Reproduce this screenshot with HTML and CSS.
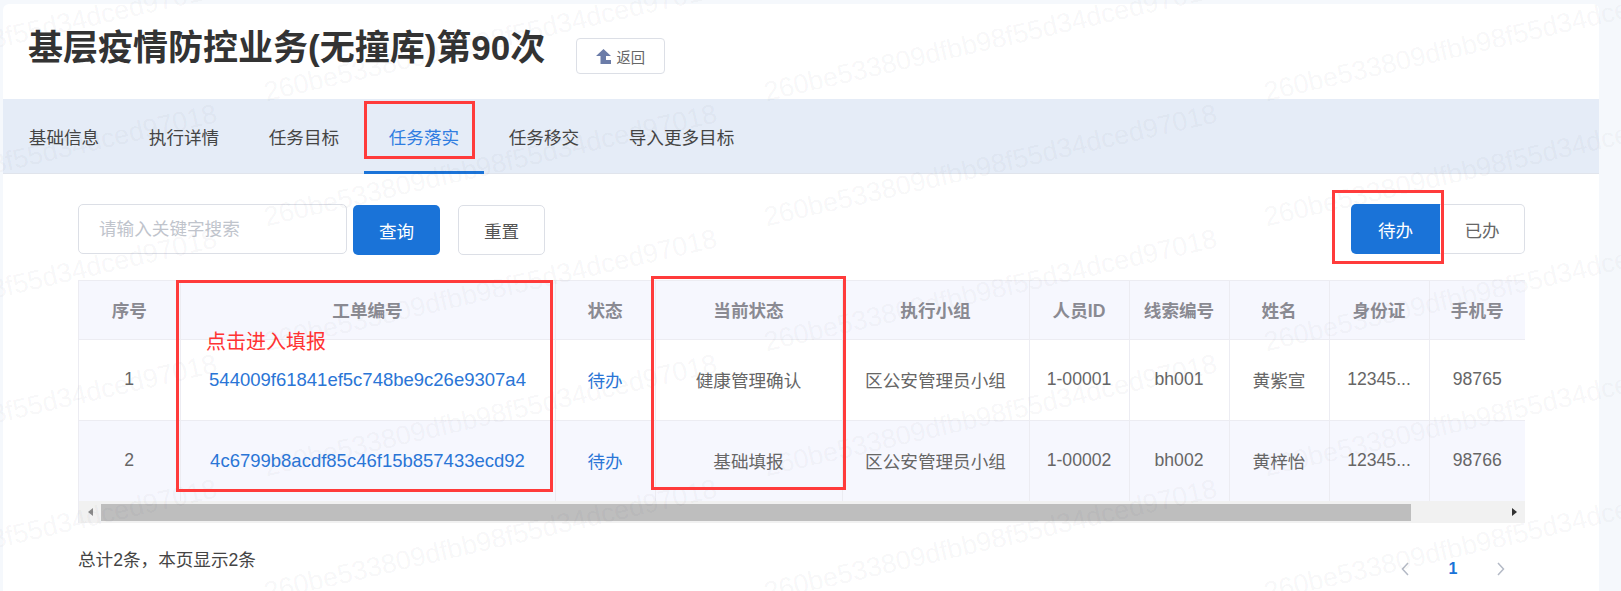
FILE: index.html
```html
<!DOCTYPE html>
<html lang="zh-CN">
<head>
<meta charset="utf-8">
<title>基层疫情防控业务(无撞库)第90次</title>
<link rel="stylesheet" href="styles.css">
</head>
<body>
<div class="page">
  <main class="card">
    <header class="head">
      <h1 class="title">基层疫情防控业务(无撞库)第90次</h1>
      <button class="back"><svg class="back-icon" viewBox="0 0 15 15"><path d="M7.5 0 15 7H10V11H15V15H4.5V7H0Z"/></svg>返回</button>
    </header>
    <nav class="tabs">
      <a class="tab">基础信息</a>
      <a class="tab">执行详情</a>
      <a class="tab">任务目标</a>
      <a class="tab active">任务落实</a>
      <a class="tab">任务移交</a>
      <a class="tab">导入更多目标</a>
    </nav>
    <section class="content">
      <div class="toolbar">
        <div class="search">
          <div class="input">请输入关键字搜索</div>
          <button class="btn primary">查询</button>
          <button class="btn reset">重置</button>
        </div>
        <div class="toggle">
          <button class="seg on">待办</button>
          <button class="seg off">已办</button>
        </div>
      </div>
      <div class="table-wrap">
        <table class="grid">
          <colgroup>
            <col class="c1"><col class="c2"><col class="c3"><col class="c4"><col class="c5">
            <col class="c6"><col class="c6"><col class="c6"><col class="c6"><col class="c7">
          </colgroup>
          <thead>
            <tr><th>序号</th><th>工单编号</th><th>状态</th><th>当前状态</th><th>执行小组</th><th>人员ID</th><th>线索编号</th><th>姓名</th><th>身份证</th><th>手机号</th></tr>
          </thead>
          <tbody>
            <tr><td>1</td><td><a class="link id">544009f61841ef5c748be9c26e9307a4</a></td><td><a class="link">待办</a></td><td>健康管理确认</td><td>区公安管理员小组</td><td>1-00001</td><td>bh001</td><td>黄紫宣</td><td>12345...</td><td>98765</td></tr>
            <tr class="alt"><td>2</td><td><a class="link id">4c6799b8acdf85c46f15b857433ecd92</a></td><td><a class="link">待办</a></td><td>基础填报</td><td>区公安管理员小组</td><td>1-00002</td><td>bh002</td><td>黄梓怡</td><td>12345...</td><td>98766</td></tr>
          </tbody>
        </table>
        <div class="scrollbar">
          <span class="arrow left"></span>
          <span class="thumb"></span>
          <span class="arrow right"></span>
        </div>
      </div>
      <div class="foot">
        <div class="total">总计2条，本页显示2条</div>
        <div class="pager">
          <span class="pg"><svg class="chev" viewBox="0 0 8 14"><path d="M7 1 1.5 7 7 13"/></svg></span>
          <span class="pg cur">1</span>
          <span class="pg"><svg class="chev" viewBox="0 0 8 14"><path d="M1 1 6.5 7 1 13"/></svg></span>
        </div>
      </div>
    </section>
  </main>

  <div class="watermarks" aria-hidden="true">
    <span>260be533809dfbb98f55d34dced97018</span><span>260be533809dfbb98f55d34dced97018</span><span>260be533809dfbb98f55d34dced97018</span><span>260be533809dfbb98f55d34dced97018</span>
    <span>260be533809dfbb98f55d34dced97018</span><span>260be533809dfbb98f55d34dced97018</span><span>260be533809dfbb98f55d34dced97018</span><span>260be533809dfbb98f55d34dced97018</span>
    <span>260be533809dfbb98f55d34dced97018</span><span>260be533809dfbb98f55d34dced97018</span><span>260be533809dfbb98f55d34dced97018</span><span>260be533809dfbb98f55d34dced97018</span>
    <span>260be533809dfbb98f55d34dced97018</span><span>260be533809dfbb98f55d34dced97018</span><span>260be533809dfbb98f55d34dced97018</span><span>260be533809dfbb98f55d34dced97018</span>
    <span>260be533809dfbb98f55d34dced97018</span><span>260be533809dfbb98f55d34dced97018</span><span>260be533809dfbb98f55d34dced97018</span><span>260be533809dfbb98f55d34dced97018</span>
    <span>260be533809dfbb98f55d34dced97018</span><span>260be533809dfbb98f55d34dced97018</span><span>260be533809dfbb98f55d34dced97018</span><span>260be533809dfbb98f55d34dced97018</span>
  </div>

  <div class="mark mark-tab"></div>
  <div class="mark mark-toggle"></div>
  <div class="mark mark-id"></div>
  <div class="mark mark-state"></div>
  <div class="note">点击进入填报</div>
</div>
</body>
</html>
```

FILE: styles.css
```css
* { box-sizing: border-box; }
html, body { margin: 0; padding: 0; }
body {
  font-family: "Liberation Sans", "Noto Sans CJK SC", sans-serif;
  font-size: 17.6px;
  color: #555;
}
.page {
  position: relative;
  width: 1621px;
  height: 591px;
  overflow: hidden;
  background: #f5f8fc;
  padding: 4px 22px 0 3px;
}
.card {
  background: #fff;
  height: 587px;
  border-radius: 6px 6px 0 0;
  display: flex;
  flex-direction: column;
}
.head {
  height: 95px;
  flex: none;
  display: flex;
  align-items: flex-start;
  padding-left: 25px;
}
.title {
  margin: 19px 0 0;
  font-size: 35px;
  line-height: 50px;
  font-weight: 700;
  color: #333;
  white-space: nowrap;
}
.back {
  margin: 34px 0 0 31px;
  width: 89px;
  height: 36px;
  background: #fff;
  border: 1px solid #dcdfe6;
  border-radius: 4px;
  font: inherit;
  font-size: 14.3px;
  color: #666;
  display: flex;
  align-items: center;
  justify-content: center;
  gap: 5px;
  padding: 0;
}
.back-icon { width: 15px; height: 15px; fill: #6b7ca8; }
.tabs {
  height: 75px;
  flex: none;
  background: #e5ecf7;
  border-bottom: 1px solid #e0e4ec;
  display: flex;
  padding-left: 1px;
}
.tab {
  padding: 0 24.8px;
  height: 75px;
  display: flex;
  align-items: center;
  justify-content: center;
  white-space: nowrap;
  color: #444;
}
.tab.active {
  color: #2f7de1;
  box-shadow: inset 0 -3px 0 #1a73d8;
}
.content { padding: 30px 74px 0 75px; flex: 1; }
.toolbar {
  display: flex;
  justify-content: space-between;
  height: 50px;
}
.search { display: flex; align-items: flex-start; }
.input {
  width: 269px;
  height: 50px;
  border: 1px solid #dcdfe6;
  border-radius: 5px;
  color: #c0c4cc;
  padding-left: 20px;
  line-height: 48px;
}
.btn {
  font: inherit;
  height: 50px;
  width: 87px;
  margin-top: 1px;
  border-radius: 5px;
  padding: 0;
}
.primary {
  position: relative;
  z-index: 2;
  margin-left: 6px;
  background: #1a73d8;
  border: 0;
  color: #fff;
}
.reset {
  margin-left: 18px;
  background: #fff;
  border: 1px solid #dcdfe6;
  color: #555;
}
.toggle { display: flex; }
.seg { font: inherit; height: 50px; padding: 0; }
.seg.on {
  position: relative;
  z-index: 2;
  width: 89px;
  background: #1a73d8;
  color: #fff;
  border: 0;
  border-radius: 5px 0 0 5px;
}
.seg.off {
  width: 85px;
  background: #fff;
  color: #666;
  border: 1px solid #dcdfe6;
  border-left: 0;
  border-radius: 0 5px 5px 0;
}
.table-wrap {
  position: relative;
  margin-top: 26px;
  width: 1447px;
  border-left: 1px solid #ececf2;
  border-top: 1px solid #ececf2;
}
.grid {
  width: 1446px;
  border-collapse: collapse;
  table-layout: fixed;
}
.c1 { width: 101px; }
.c2 { width: 375px; }
.c3 { width: 100px; }
.c4 { width: 187px; }
.c5 { width: 187px; }
.c6 { width: 100px; }
.c7 { width: 96px; }
th, td {
  padding: 0;
  text-align: center;
  border-right: 1px solid #ececf2;
  border-bottom: 1px solid #ececf2;
  white-space: nowrap;
  overflow: hidden;
}
th:last-child, td:last-child { border-right: 0; }
th {
  height: 58px;
  background: #f6f7fe;
  color: #8a8a92;
  font-weight: 700;
}
td { height: 81px; background: #fff; color: #666; }
.alt td { background: #f6f7fe; border-bottom: 0; }
.link { color: #2a75d6; }
.id { font-size: 18.5px; }
.scrollbar {
  position: relative;
  height: 22px;
  background: #f1f1f1;
  display: flex;
  align-items: center;
}
.thumb {
  position: absolute;
  left: 22px;
  width: 1310px;
  height: 17px;
  background: #bebebe;
}
.arrow { width: 0; height: 0; border-style: solid; border-color: transparent; }
.arrow.left {
  margin-left: 9px;
  border-width: 4px 5px 4px 0;
  border-right-color: #8a8a8a;
}
.arrow.right {
  margin-left: auto;
  margin-right: 8px;
  border-width: 4px 0 4px 5px;
  border-left-color: #333;
}
.foot {
  display: flex;
  justify-content: space-between;
  align-items: flex-start;
  padding-top: 25px;
}
.total { line-height: 24px; color: #444; }
.pager { display: flex; height: 40px; margin-top: 1px; }
.pg {
  width: 48px;
  height: 40px;
  display: flex;
  align-items: center;
  justify-content: center;
}
.cur { color: #1a73d8; font-weight: 700; font-size: 16px; }
.chev { width: 8px; height: 14px; fill: none; stroke: #b4bac6; stroke-width: 1.5; }
.watermarks {
  position: absolute;
  left: -232px;
  top: -17px;
  z-index: 1;
  display: grid;
  grid-template-columns: repeat(4, 500px);
  grid-auto-rows: 125px;
  pointer-events: none;
}
.watermarks span {
  display: block;
  height: 32px;
  line-height: 32px;
  font-size: 27px;
  color: rgba(60, 60, 70, 0.05);
  white-space: nowrap;
  transform-origin: 0 100%;
  transform: translateY(-32px) rotate(-13deg);
}
.mark {
  position: absolute;
  z-index: 3;
  border: 3px solid #ff3b3b;
}
.mark-tab { left: 364px; top: 101px; width: 111px; height: 58px; }
.mark-toggle { left: 1332px; top: 190px; width: 112px; height: 74px; }
.mark-id { left: 176px; top: 280px; width: 377px; height: 212px; }
.mark-state { left: 651px; top: 276px; width: 195px; height: 214px; }
.note {
  position: absolute;
  z-index: 3;
  left: 206px;
  top: 330px;
  font-size: 20px;
  line-height: 24px;
  color: #ff3333;
}
```
